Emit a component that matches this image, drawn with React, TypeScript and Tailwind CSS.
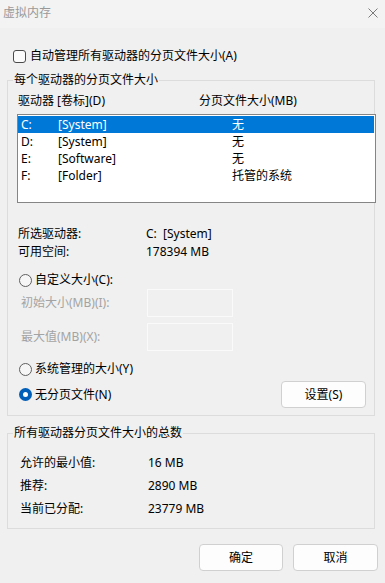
import React from 'react';

type Drive = { letter: string; label: string; size: string };

const drives: Drive[] = [
  { letter: 'C:', label: '[System]', size: '无' },
  { letter: 'D:', label: '[System]', size: '无' },
  { letter: 'E:', label: '[Software]', size: '无' },
  { letter: 'F:', label: '[Folder]', size: '托管的系统' },
];

function Radio({ checked }: { checked?: boolean }) {
  if (checked) {
    return (
      <span className="w-[13px] h-[13px] rounded-full bg-[#005fb8] flex items-center justify-center shrink-0">
        <span className="w-[5px] h-[5px] rounded-full bg-white" />
      </span>
    );
  }
  return <span className="w-[13px] h-[13px] rounded-full border border-[#5f5f5f] bg-[#f6f6f6] shrink-0" />;
}

function Legend({ children }: { children: React.ReactNode }) {
  return (
    <div className="-mt-[9px] ml-[5px] px-[1px] h-[16px] leading-[16px] bg-[#f0f0f0] w-fit">{children}</div>
  );
}

function Button({ children, w }: { children: React.ReactNode; w: string }) {
  return (
    <button
      className={`${w} h-[27px] rounded-[4px] border border-[#d0d0d0] bg-[#fdfdfd] flex items-center justify-center text-[12px]`}
    >
      {children}
    </button>
  );
}

export default function App() {
  return (
    <div
      className="w-[385px] h-[583px] bg-[#f0f0f0] text-[12px] text-black flex flex-col overflow-hidden"
      style={{ fontFamily: '"Noto Sans", "Noto Sans CJK SC", sans-serif' }}
    >
      {/* title bar */}
      <div className="h-[28px] bg-[#f3f3f3] flex items-center justify-between pl-[3px] pr-[7px] shrink-0">
        <span className="text-[#999999] leading-[16px] -mt-[2px]">虚拟内存</span>
        <svg width="10" height="10" viewBox="0 0 10 10" className="-mt-[2px]">
          <path d="M0.5 0.5 L9.5 9.5 M9.5 0.5 L0.5 9.5" stroke="#7a7a7a" strokeWidth="1" fill="none" />
        </svg>
      </div>

      <div className="px-[7px] flex flex-col">
        {/* auto manage */}
        <div className="mt-[20px] ml-[6px] h-[16px] flex items-center gap-[4px]">
          <span className="w-[13px] h-[13px] rounded-[3px] border border-[#4a4a4a] bg-[#fbfbfb]" />
          <span className="leading-[16px]">自动管理所有驱动器的分页文件大小(A)</span>
        </div>

        {/* per-drive group */}
        <div className="mt-[16px] w-[368px] h-[336px] border border-[#dcdcdc] flex flex-col">
          <Legend>每个驱动器的分页文件大小</Legend>

          <div className="mt-[5px] h-[16px] leading-[16px] flex pl-[10px]">
            <span className="w-[181px]">驱动器 [卷标](D)</span>
            <span>分页文件大小(MB)</span>
          </div>

          <div className="mt-[5px] ml-[9px] w-[359px] h-[89px] border border-[#858585] bg-white pt-[1px] pr-[1px] shrink-0">
            {drives.map((d, i) => (
              <div
                key={d.letter}
                className={`h-[17px] leading-[17px] flex pl-[3px] ${i === 0 ? 'bg-[#0078d7] text-white' : ''}`}
              >
                <span className="w-[37px]">{d.letter}</span>
                <span className="w-[174px]">{d.label}</span>
                <span>{d.size}</span>
              </div>
            ))}
          </div>

          <div className="mt-[22px] pl-[10px] flex flex-col">
            <div className="h-[18px] leading-[18px] flex">
              <span className="w-[128px]">所选驱动器:</span>
              <span>C:&nbsp;&nbsp;[System]</span>
            </div>
            <div className="h-[18px] leading-[18px] flex">
              <span className="w-[128px]">可用空间:</span>
              <span>178394 MB</span>
            </div>
          </div>

          <div className="mt-[11px] ml-[11px] h-[16px] flex items-center gap-[3px]">
            <Radio />
            <span className="leading-[16px]">自定义大小(C):</span>
          </div>

          <div className="mt-[1px] ml-[13px] h-[28px] flex items-center text-[#a3a3a3]">
            <span className="w-[126px]">初始大小(MB)(I):</span>
            <span className="w-[86px] h-[28px] border border-[#fafafa]" />
          </div>
          <div className="mt-[6px] ml-[13px] h-[28px] flex items-center text-[#a3a3a3]">
            <span className="w-[126px]">最大值(MB)(X):</span>
            <span className="w-[86px] h-[28px] border border-[#fafafa]" />
          </div>

          <div className="mt-[10px] ml-[11px] h-[16px] flex items-center gap-[3px]">
            <Radio />
            <span className="leading-[16px]">系统管理的大小(Y)</span>
          </div>

          <div className="mt-[4px] ml-[11px] h-[27px] flex items-center">
            <div className="flex items-center gap-[3px] w-[262px]">
              <Radio checked />
              <span className="leading-[16px]">无分页文件(N)</span>
            </div>
            <Button w="w-[85px]">设置(S)</Button>
          </div>
        </div>

        {/* totals group */}
        <div className="mt-[17px] w-[368px] h-[96px] border border-[#dcdcdc] flex flex-col">
          <Legend>所有驱动器分页文件大小的总数</Legend>
          <div className="mt-[13px] pl-[12px] flex flex-col gap-[5px]">
            {[
              ['允许的最小值:', '16 MB'],
              ['推荐:', '2890 MB'],
              ['当前已分配:', '23779 MB'],
            ].map(([k, v]) => (
              <div key={k} className="h-[18px] leading-[18px] flex">
                <span className="w-[128px]">{k}</span>
                <span>{v}</span>
              </div>
            ))}
          </div>
        </div>

        {/* dialog buttons */}
        <div className="mt-[15px] flex justify-end gap-[10px]">
          <Button w="w-[84px]">确定</Button>
          <Button w="w-[85px]">取消</Button>
        </div>
      </div>
    </div>
  );
}
